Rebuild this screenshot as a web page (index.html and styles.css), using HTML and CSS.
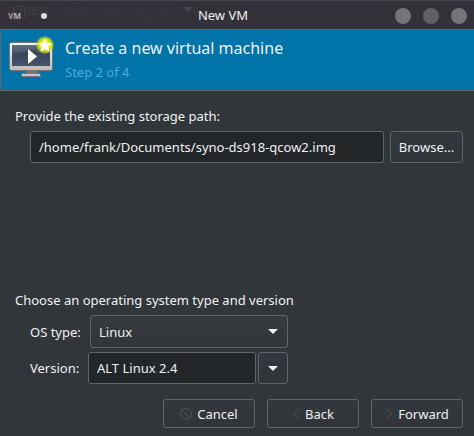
FILE: index.html
```html
<!DOCTYPE html>
<html lang="en">
<head>
<meta charset="UTF-8">
<meta name="viewport" content="width=device-width, initial-scale=1.0">
<title>New VM</title>
<link rel="stylesheet" href="styles.css">
</head>
<body>
  <div class="titlebar">
    <div class="behind" aria-hidden="true">
      <span>Open</span>
      <svg width="154" height="22" viewBox="0 0 154 22" fill="none" stroke="currentColor">
        <g opacity="0.5">
          <circle cx="28" cy="9" r="7"/>
          <circle cx="28" cy="9" r="2"/>
          <circle cx="63" cy="9" r="7"/>
          <path d="M61 6v6M66 6v6"/>
          <circle cx="103" cy="9" r="11"/>
          <path d="M103 0v5"/>
        </g>
        <path d="M135 6h10l-5 5z" fill="#48474e" stroke="none"/>
      </svg>
    </div>
    <div class="titlebar-left">
      <span class="logo"><b>V</b>M</span>
      <span class="dot"></span>
    </div>
    <h1>New VM</h1>
    <div class="window-buttons">
      <button type="button" aria-label="Minimize"></button>
      <button type="button" aria-label="Maximize" class="dim"></button>
      <button type="button" aria-label="Close"></button>
    </div>
  </div>

  <header class="banner">
    <svg width="46" height="44" viewBox="0 0 46 44">
      <defs>
        <linearGradient id="screen" x1="0" y1="0" x2="0" y2="1">
          <stop offset="0" stop-color="#536077"/>
          <stop offset="0.4" stop-color="#39465a"/>
          <stop offset="1" stop-color="#46556b"/>
        </linearGradient>
        <linearGradient id="frame" x1="0" y1="0" x2="0" y2="1">
          <stop offset="0" stop-color="#f6f6f6"/>
          <stop offset="1" stop-color="#bcbcbc"/>
        </linearGradient>
        <radialGradient id="glow">
          <stop offset="0.5" stop-color="#e8f000"/>
          <stop offset="0.75" stop-color="#c3d820" stop-opacity="0.85"/>
          <stop offset="1" stop-color="#b0d030" stop-opacity="0"/>
        </radialGradient>
      </defs>
      <path d="M17 34h12v4H17z" fill="#777"/>
      <rect x="12.500" y="37.500" width="19" height="3" rx="1" fill="#c4c4c4" stroke="#777"/>
      <rect x="0.500" y="6.500" width="43" height="28" rx="2" fill="url(#frame)" stroke="#747474"/>
      <path d="M3 9h38v21H3z" fill="url(#screen)"/>
      <path d="M3 9h38L3 19z" fill="#fff" opacity="0.08"/>
      <path d="M19 13v15l9-7.500z" fill="#fff"/>
      <circle cx="36" cy="9" r="9.500" fill="url(#glow)"/>
      <path d="M36 2l2 4.700 5 .5-3.700 3.400 1.200 5-4.500-2.700-4.500 2.700 1.200-5L29 7.200l5-.5z" fill="#fff"/>
    </svg>
    <div>
      <h2>Create a new virtual machine</h2>
      <p>Step 2 of 4</p>
    </div>
  </header>

  <form class="wizard">
    <section>
      <label for="path">Provide the existing storage path:</label>
      <div class="path-row">
        <input type="text" id="path" value="/home/frank/Documents/syno-ds918-qcow2.img">
        <button type="button" class="btn">Browse...</button>
      </div>
    </section>

    <section class="os">
      <p>Choose an operating system type and version</p>
      <div class="os-row">
        <label for="ostype">OS type:</label>
        <div class="select">
          <select id="ostype">
            <option>Linux</option>
          </select>
          <svg class="arrow" width="10" height="5" viewBox="0 0 10 5"><path d="M0 0h10L5 5z" fill="currentColor"/></svg>
        </div>
      </div>
      <div class="os-row version">
        <label for="version">Version:</label>
        <div class="combo">
          <input type="text" id="version" value="ALT Linux 2.4">
          <button type="button" class="btn drop" aria-label="Show versions">
            <svg width="10" height="5" viewBox="0 0 10 5"><path d="M0 0h10L5 5z" fill="currentColor"/></svg>
          </button>
        </div>
      </div>
    </section>

    <footer class="actions">
      <button type="button" class="btn">
        <svg width="12" height="12" viewBox="0 0 12 12"><circle cx="6" cy="6" r="5.500"/><path d="M2 2l8 8"/></svg>
        Cancel
      </button>
      <button type="button" class="btn">
        <svg width="8" height="12" viewBox="0 0 8 12"><path d="M7 0.500L1.500 6 7 11.500"/></svg>
        Back
      </button>
      <button type="button" class="btn">
        <svg width="8" height="12" viewBox="0 0 8 12"><path d="M1 0.500L6.500 6 1 11.500"/></svg>
        Forward
      </button>
    </footer>
  </form>
</body>
</html>
```
FILE: styles.css
```css
* {
  box-sizing: border-box;
}

body {
  display: flex;
  flex-direction: column;
  min-height: 100vh;
  margin: 0;
  font-family: "Noto Sans", "Open Sans", sans-serif;
  font-size: 13px;
  line-height: 18px;
  color: #eff0f1;
  background-color: #31363b;
}

h1, h2, p {
  margin: 0;
  font-weight: normal;
}

.titlebar {
  position: relative;
  display: flex;
  align-items: center;
  height: 30px;
  padding: 0 7px 0 8px;
  background-color: #33323a;
  border-top: 1px solid #45454b;
  border-bottom: 1px solid #66696c;
}

.titlebar h1 {
  flex: 1;
  padding-left: 4px;
  font-size: 13px;
  text-align: center;
}

/* window showing through the title bar */
.behind {
  position: absolute;
  left: 12px;
  top: 0;
  display: flex;
  font-size: 14px;
  color: #403f46;
}

.titlebar-left {
  position: relative;
  display: flex;
  align-items: center;
  gap: 19px;
  padding-top: 2px;
}

.logo {
  width: 14px;
  font-size: 8px;
  line-height: 8px;
  font-weight: bold;
  color: #b4b2b6;
}

.logo b {
  color: #a08088;
}

.dot {
  width: 6px;
  height: 6px;
  border-radius: 50%;
  background-color: #dedee0;
}

.window-buttons {
  display: flex;
  gap: 12px;
  padding-top: 2px;
}

.window-buttons button {
  width: 16px;
  height: 16px;
  padding: 0;
  border: none;
  border-radius: 50%;
  background-color: #747579;
}

.window-buttons .dim {
  background-color: #5f6064;
}

.banner {
  display: flex;
  gap: 10px;
  height: 61px;
  padding: 6px 8px;
  background-color: #0073a9;
  border-left: 1px solid #66696c;
  border-bottom: 1px solid #66696c;
}

.banner h2 {
  font-size: 16px;
  line-height: 24px;
}

.banner p {
  line-height: 24px;
  color: #4faadb;
}

.wizard {
  display: flex;
  flex: 1;
  flex-direction: column;
  padding: 16px 11px 8px 15px;
}

.path-row {
  display: flex;
  gap: 6px;
  padding: 6px 0 0 15px;
}

input,
select,
.btn {
  height: 32px;
  border: 1px solid #616569;
  border-radius: 3px;
  font: inherit;
  color: inherit;
}

input {
  flex: 1;
  min-width: 0;
  padding: 0 8px;
  background-color: #232629;
}

.btn {
  padding: 0 6px;
  background: linear-gradient(#33383e, #31353a);
}

.path-row .btn {
  width: 73px;
}

.os {
  margin-top: auto;
}

.os-row {
  display: grid;
  grid-template-columns: 60px 198px;
  align-items: center;
  padding: 6px 0 0 15px;
}

.version {
  grid-template-columns: 58px 200px;
  padding-top: 4px;
}

.select {
  position: relative;
}

.os-row select {
  display: block;
  width: 100%;
  height: 33px;
  padding: 0 8px;
  appearance: none;
  background: linear-gradient(#363b40, #31363b);
}

.arrow {
  position: absolute;
  right: 10px;
  top: 14px;
  pointer-events: none;
}

.combo {
  display: flex;
  gap: 2px;
}

.drop {
  display: flex;
  align-items: center;
  justify-content: center;
  width: 30px;
}

.actions {
  display: flex;
  justify-content: flex-end;
  gap: 12px;
  margin-top: 15px;
}

.actions .btn {
  display: flex;
  align-items: center;
  justify-content: center;
  gap: 5px;
  width: 92px;
  height: 29px;
}

.actions svg {
  fill: none;
  stroke: #505458;
}
```
